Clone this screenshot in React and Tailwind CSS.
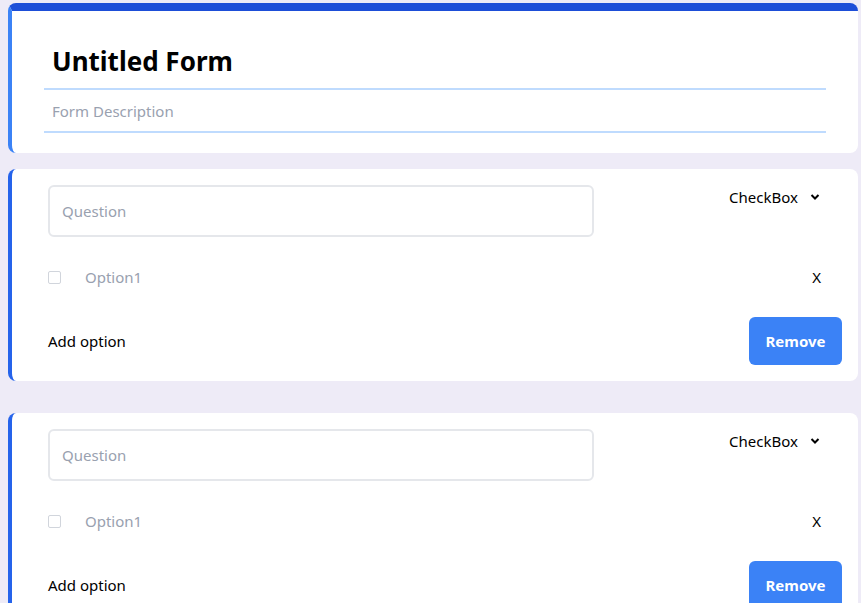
import React from 'react';

export default function App() {
  return (
    <div
      className="min-h-screen bg-[#eeebf7] pt-[3px] pl-2 pr-[3px] pb-8 text-black"
      style={{ fontFamily: '"Noto Sans", "Open Sans", sans-serif' }}
    >
      {/* ── HEADER CARD ── */}
      <div className="bg-white rounded-lg border-t-8 border-t-[#1d4ed8] border-l-4 border-l-[#3b82f6] pl-8 pr-8 pt-[33px] pb-[20px]">
        <div className="pl-2 pb-[10px] border-b-2 border-[#bfdbfe] text-[26px] font-bold leading-[34px]">
          Untitled Form
        </div>
        <div className="pl-2 pt-[11px] pb-[10px] border-b-2 border-[#bfdbfe] text-[15px] text-gray-400 leading-[20px]">
          Form Description
        </div>
      </div>

      <div className="mt-4 flex flex-col gap-8">
        <QuestionCard />
        <QuestionCard />
      </div>
    </div>
  );
}

function QuestionCard() {
  return (
    <div className="bg-white rounded-lg border-l-4 border-l-[#2563eb] pl-9 pr-4 pt-4 pb-4">
      <div className="flex items-start justify-between">
        <div className="w-[546px] h-[52px] rounded-md border-2 border-gray-200 flex items-center px-3 text-[15px] text-gray-400">
          Question
        </div>
        <div className="flex items-center gap-3 mt-[2px] mr-[22px] text-[15px] leading-[20px]">
          <span>CheckBox</span>
          <svg width="10" height="8" viewBox="0 0 10 8">
            <path d="M1.5 2 L5 5.5 L8.5 2" fill="none" stroke="black" strokeWidth="2" />
          </svg>
        </div>
      </div>

      <div className="flex items-center justify-between mt-[30px] h-[20px]">
        <div className="flex items-center">
          <span className="w-[13px] h-[13px] border border-gray-300 rounded-[2px] bg-white" />
          <span className="ml-[24px] text-[15px] text-gray-400">Option1</span>
        </div>
        <span className="mr-[21px] text-[15px]">X</span>
      </div>

      <div className="flex items-center justify-between mt-[30px]">
        <span className="text-[15px]">Add option</span>
        <button className="w-[93px] h-[48px] rounded-md bg-[#3b82f6] text-white text-[15px] font-bold">
          Remove
        </button>
      </div>
    </div>
  );
}
